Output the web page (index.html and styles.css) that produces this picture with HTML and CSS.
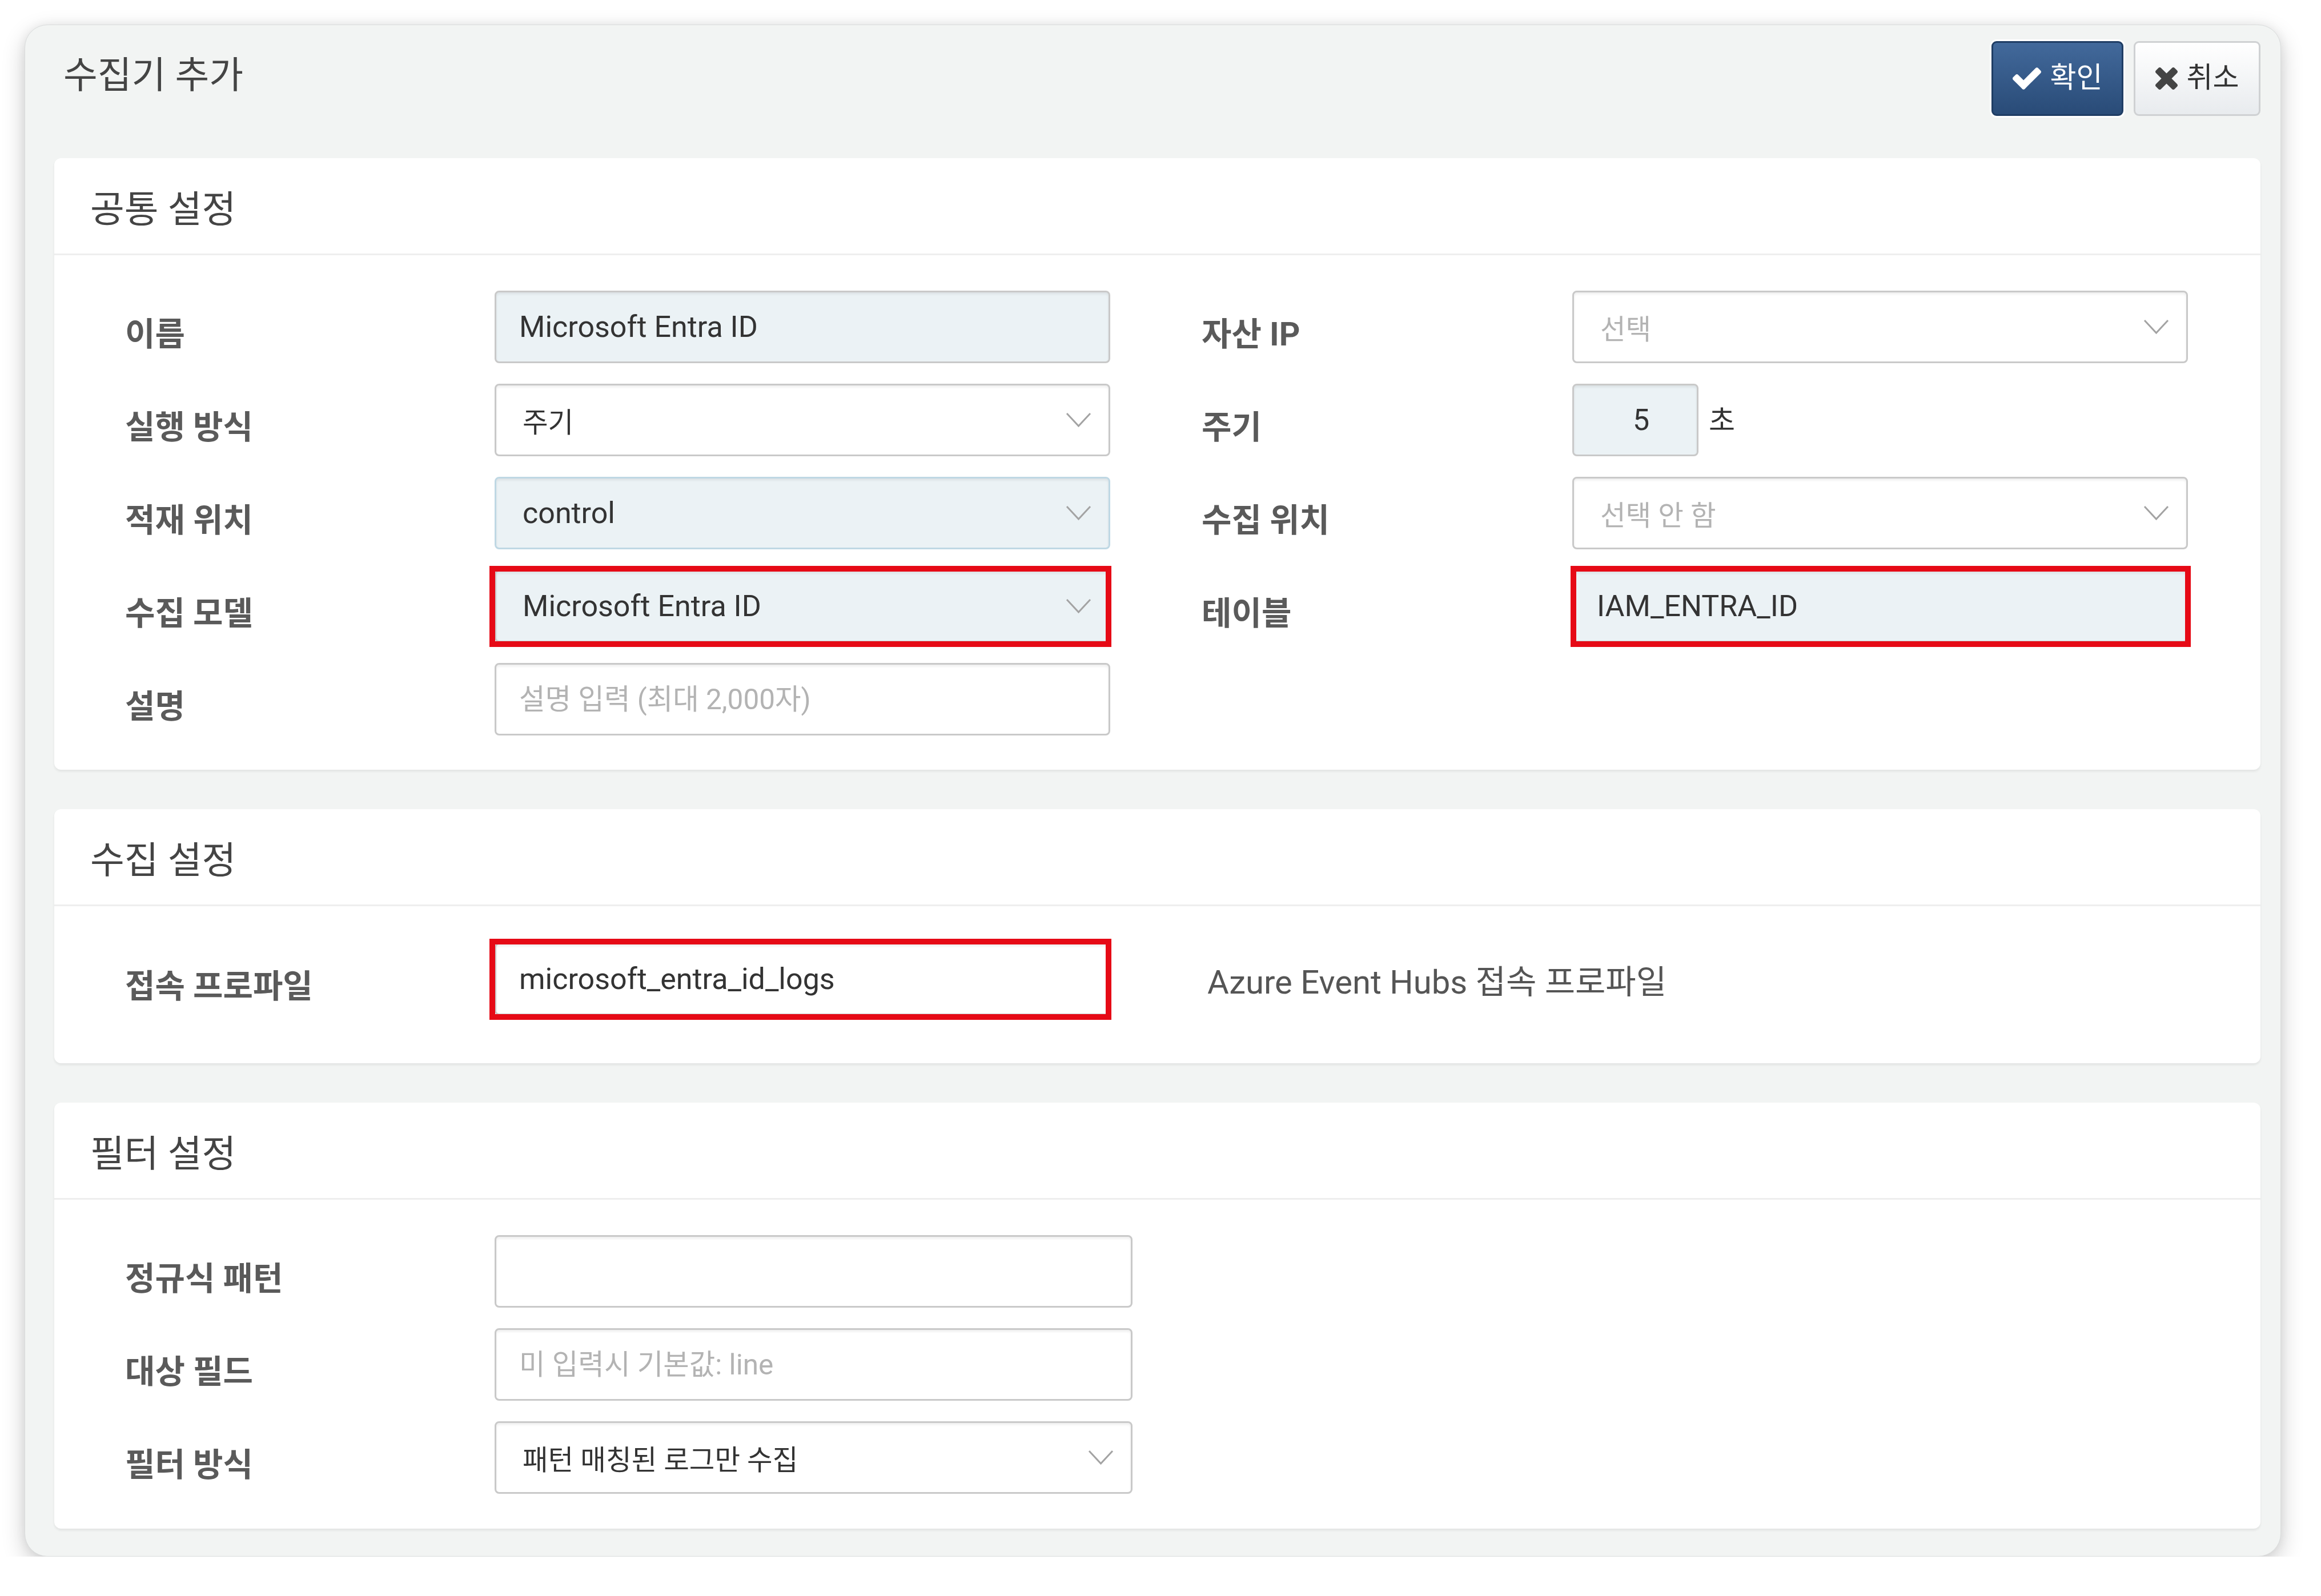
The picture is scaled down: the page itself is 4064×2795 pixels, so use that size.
FILE: index.html
```html
<!DOCTYPE html>
<html lang="ko">
<head>
<meta charset="utf-8">
<title>수집기 추가</title>
<link rel="stylesheet" href="styles.css">
</head>
<body>
<div class="modal">
  <div class="modal-head">
    <h1 class="modal-title">수집기 추가</h1>
    <div class="actions">
      <button class="btn btn-primary" type="button">
        <svg class="ico ico-check" viewBox="121 334 1550 1188"><path d="M1671 566q0 40-28 68l-724 724-136 136q-28 28-68 28t-68-28l-136-136-362-362q-28-28-28-68t28-68l136-136q28-28 68-28t68 28l294 295 656-657q28-28 68-28t68 28l136 136q28 28 28 68z"/></svg>
        <span>확인</span>
      </button>
      <button class="btn btn-default" type="button">
        <svg class="ico ico-times" viewBox="302 366 1188 1188"><path d="M1490 1322q0 40-28 68l-136 136q-28 28-68 28t-68-28l-294-294-294 294q-28 28-68 28t-68-28l-136-136q-28-28-28-68t28-68l294-294-294-294q-28-28-28-68t28-68l136-136q28-28 68-28t68 28l294 294 294-294q28-28 68-28t68 28l136 136q28 28 28 68t-28 68l-294 294 294 294q28 28 28 68z"/></svg>
        <span>취소</span>
      </button>
    </div>
  </div>

  <section class="panel">
    <div class="panel-head">공통 설정</div>
    <div class="panel-body grid-two">
      <div class="lbl">이름</div>
      <div class="cell"><input class="field ro" type="text" value="Microsoft Entra ID" readonly></div>
      <div class="lbl lbl-r">자산 IP</div>
      <div class="cell"><div class="field select"><span class="ph ko">선택</span><svg class="chev" viewBox="0 0 45 27"><polyline points="2,2 22.5,24 43,2"/></svg></div></div>

      <div class="lbl">실행 방식</div>
      <div class="cell"><div class="field select"><span class="val ko">주기</span><svg class="chev" viewBox="0 0 45 27"><polyline points="2,2 22.5,24 43,2"/></svg></div></div>
      <div class="lbl lbl-r">주기</div>
      <div class="cell inline"><input class="field ro num" type="text" value="5" readonly><span class="unit">초</span></div>

      <div class="lbl">적재 위치</div>
      <div class="cell"><div class="field select ro ro-blue"><span class="val">control</span><svg class="chev" viewBox="0 0 45 27"><polyline points="2,2 22.5,24 43,2"/></svg></div></div>
      <div class="lbl lbl-r">수집 위치</div>
      <div class="cell"><div class="field select"><span class="ph ko">선택 안 함</span><svg class="chev" viewBox="0 0 45 27"><polyline points="2,2 22.5,24 43,2"/></svg></div></div>

      <div class="lbl">수집 모델</div>
      <div class="cell"><div class="field select ro"><span class="val">Microsoft Entra ID</span><svg class="chev" viewBox="0 0 45 27"><polyline points="2,2 22.5,24 43,2"/></svg></div><span class="mark"></span></div>
      <div class="lbl lbl-r">테이블</div>
      <div class="cell"><input class="field ro" type="text" value="IAM_ENTRA_ID" readonly><span class="mark mark-r"></span></div>

      <div class="lbl">설명</div>
      <div class="cell"><input class="field mixed" type="text" placeholder="설명 입력 (최대 2,000자)"></div>
    </div>
  </section>

  <section class="panel">
    <div class="panel-head">수집 설정</div>
    <div class="panel-body grid-conn">
      <div class="lbl">접속 프로파일</div>
      <div class="cell"><input class="field" type="text" value="microsoft_entra_id_logs"><span class="mark"></span></div>
      <div class="note">Azure Event Hubs 접속 프로파일</div>
    </div>
  </section>

  <section class="panel">
    <div class="panel-head">필터 설정</div>
    <div class="panel-body grid-one">
      <div class="lbl">정규식 패턴</div>
      <div class="cell"><input class="field" type="text"></div>

      <div class="lbl">대상 필드</div>
      <div class="cell"><input class="field mixed" type="text" placeholder="미 입력시 기본값: line"></div>

      <div class="lbl">필터 방식</div>
      <div class="cell"><div class="field select"><span class="val ko">패턴 매칭된 로그만 수집</span><svg class="chev" viewBox="0 0 45 27"><polyline points="2,2 22.5,24 43,2"/></svg></div></div>
    </div>
  </section>
</div>
</body>
</html>
```

FILE: styles.css
```css
* {
  box-sizing: border-box;
}

html, body {
  margin: 0;
  padding: 0;
  background: #ffffff;
}

body {
  font-family: Roboto, "Noto Sans CJK KR", sans-serif;
  color: #444444;
  padding: 43px 0 0 43px;
}

.modal {
  width: 3951px;
  background: #f2f4f3;
  border: 1px solid #dadcdc;
  border-radius: 40px;
  padding: 0 35px 48px 51px;
  box-shadow: 0 14px 40px rgba(0, 0, 0, 0.2), 0 0 18px rgba(0, 0, 0, 0.06);
}

.modal-head {
  height: 233px;
  display: flex;
  justify-content: space-between;
  align-items: flex-start;
}

.modal-title {
  margin: 50px 0 0 16px;
  font-size: 65px;
  line-height: 76px;
  font-weight: 400;
  color: #444444;
}

.actions {
  margin-top: 28px;
  display: flex;
  gap: 18px;
}

.btn {
  height: 131px;
  display: flex;
  align-items: center;
  justify-content: center;
  gap: 16px;
  font-family: Roboto, "Noto Sans CJK KR", sans-serif;
  font-size: 50px;
  line-height: 1;
  border-radius: 9px;
  padding: 0;
  cursor: pointer;
}

.btn span {
  position: relative;
  top: -2px;
}

.btn-primary {
  width: 231px;
  color: #ffffff;
  border: 3px solid #1f3d64;
  background: linear-gradient(#42699b, #294b77);
  box-shadow: 0 0 0 3px #ffffff;
}

.btn-default {
  width: 222px;
  color: #333333;
  border: 3px solid #cfd1d3;
  background: linear-gradient(#ffffff, #e8ebee);
}

.ico {
  display: block;
}

.ico-check {
  width: 50px;
  height: 39px;
  fill: #ffffff;
}

.ico-times {
  width: 39px;
  height: 39px;
  fill: #444444;
}

.panel {
  background: #ffffff;
  border-radius: 12px;
  box-shadow: 0 3px 4px rgba(0, 0, 0, 0.07);
  margin-bottom: 69px;
}

.panel:last-child {
  margin-bottom: 0;
}

.panel-head {
  height: 170px;
  border-bottom: 3px solid #eeeeee;
  display: flex;
  align-items: center;
  padding-left: 63px;
  font-size: 65px;
  color: #444444;
}

.panel-body {
  display: grid;
  row-gap: 36px;
  padding: 62px 0 60px 124px;
}

.grid-two {
  grid-template-columns: 647px 1078px 809px 1078px;
}

.grid-conn {
  grid-template-columns: 647px 1078px auto;
  padding-top: 64px;
  padding-bottom: 84px;
}

.grid-one {
  grid-template-columns: 647px 1117px;
  padding-bottom: 61px;
}

.lbl {
  height: 127px;
  display: flex;
  align-items: center;
  padding-top: 15px;
  font-size: 57px;
  font-weight: 700;
  color: #5a5a5a;
  white-space: nowrap;
}

.lbl-r {
  padding-left: 160px;
}

.cell {
  position: relative;
  height: 127px;
}

.cell.inline {
  display: flex;
  align-items: center;
  gap: 18px;
}

.field {
  display: flex;
  align-items: center;
  width: 100%;
  height: 127px;
  margin: 0;
  padding: 0 40px;
  border: 3px solid #c9c9c9;
  border-radius: 8px;
  background: #ffffff;
  box-shadow: inset 0 3px 4px rgba(0, 0, 0, 0.07);
  font-family: Roboto, "Noto Sans CJK KR", sans-serif;
  font-size: 52px;
  color: #333333;
  outline: none;
}

.field.mixed {
  font-size: 49.5px;
}

.field::placeholder {
  color: #b3b3b3;
}

.field.ro {
  background: #ebf2f5;
}

.field.ro-blue {
  border-color: #bfd8e4;
}

.field.num {
  width: 221px;
  text-align: center;
  padding: 0 0 0 20px;
}

.unit {
  font-size: 50px;
  color: #333333;
  position: relative;
  top: -4px;
}

.select {
  justify-content: space-between;
  padding: 0 30px 0 46px;
}

.val {
  color: #333333;
}

.ko {
  font-size: 48.5px;
}

.ph {
  color: #b3b3b3;
}

.chev {
  width: 45px;
  height: 27px;
  fill: none;
  stroke: #a3a3a3;
  stroke-width: 3;
  flex: none;
}

.mark {
  position: absolute;
  top: -7px;
  bottom: -8px;
  left: -9px;
  right: -2px;
  border: 10px solid #e60a16;
  pointer-events: none;
}

.mark-r {
  left: -3px;
  right: -5px;
}

.note {
  display: flex;
  align-items: center;
  padding-left: 170px;
  padding-top: 1px;
  font-size: 58px;
  color: #555555;
  white-space: nowrap;
}
```
